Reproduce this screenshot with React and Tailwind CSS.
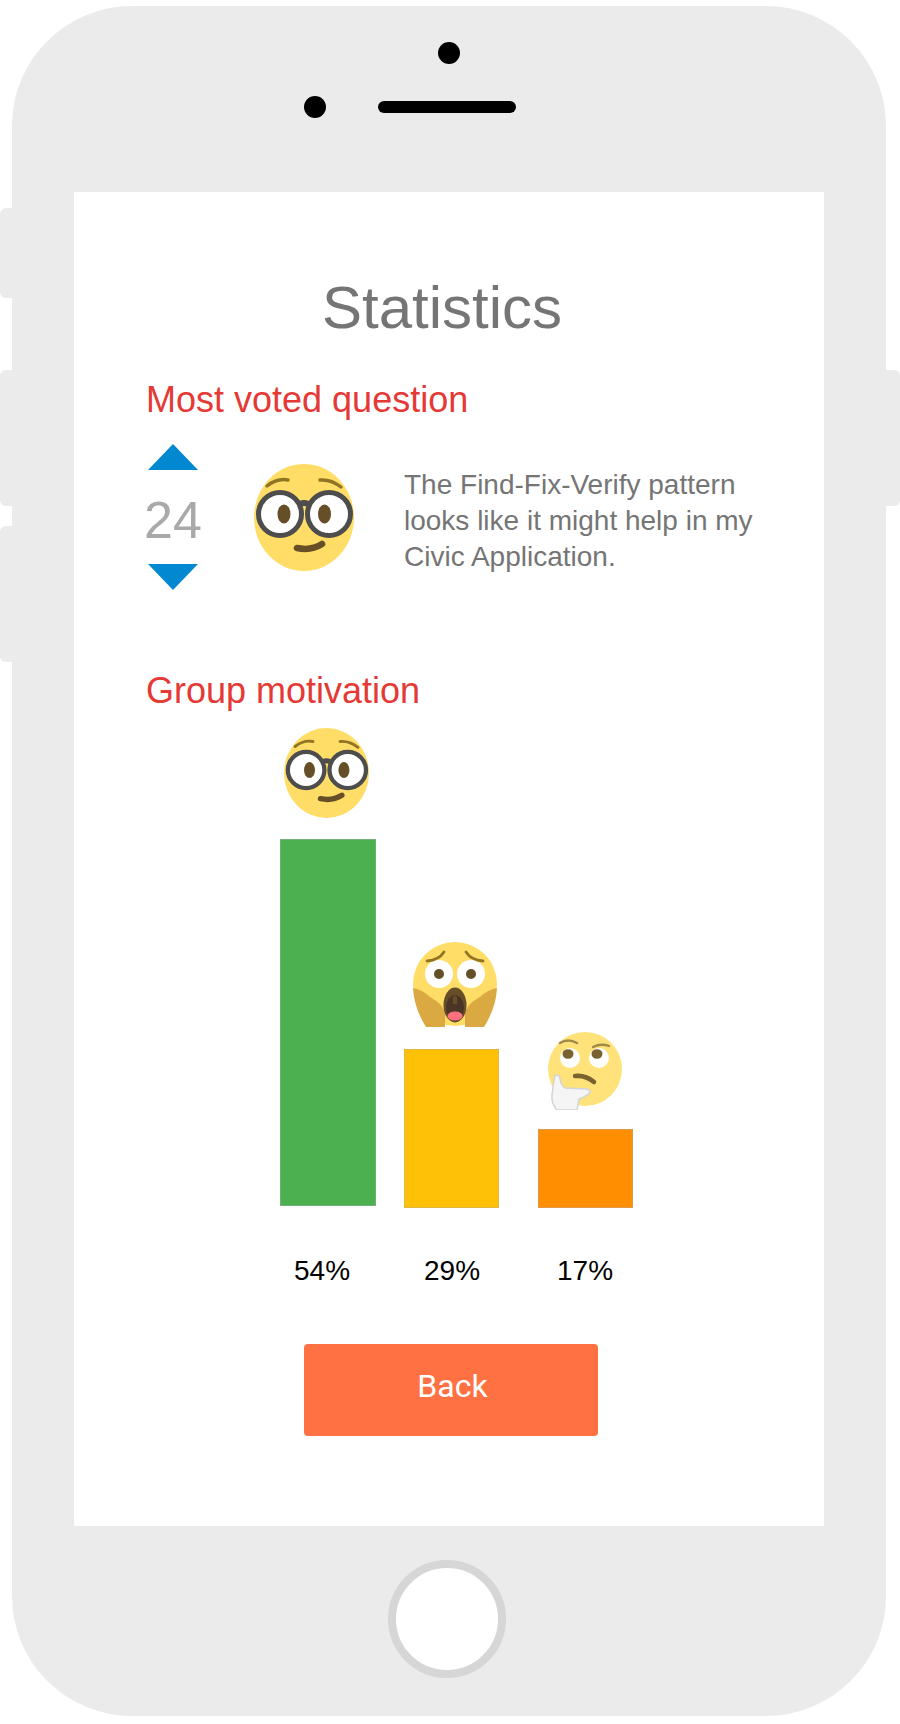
// Phone mockup with the statistics screen.

const NerdFace = ({ className }) => (
  <svg viewBox="0 0 100 107" preserveAspectRatio="none" className={className}>
    <ellipse cx="50" cy="53.5" rx="50" ry="53.5" fill="#ffdd67" />
    <path d="M13 22Q23 14 34 16M66 16Q77 15 87 23" fill="none" stroke="#917524" strokeWidth="3.5" strokeLinecap="round" />
    <circle cx="26" cy="50" r="21.5" fill="#fff" stroke="#4d4d4d" strokeWidth="5" />
    <circle cx="75" cy="50" r="21.5" fill="#fff" stroke="#4d4d4d" strokeWidth="5" />
    <path d="M46 40Q50 38 54 40" fill="none" stroke="#4d4d4d" strokeWidth="6" />
    <ellipse cx="30" cy="50" rx="6.5" ry="9.5" fill="#664e27" />
    <ellipse cx="70.5" cy="50" rx="6.5" ry="9.5" fill="#664e27" />
    <path d="M43 84Q57 87 68 80" fill="none" stroke="#664e27" strokeWidth="6.5" strokeLinecap="round" />
  </svg>
);

const ShockFace = ({ className }) => (
  <svg viewBox="0 0 84 85" className={className}>
    <circle cx="42" cy="42" r="42" fill="#ffdd67" />
    <path d="M0 46Q10 48 17 55Q30 62 32 71V85H13Q1 66 0 46Z" fill="#dba942" />
    <path d="M84 46Q74 48 67 55Q54 62 52 71V85H71Q83 66 84 46Z" fill="#dba942" />
    <circle cx="26" cy="32" r="14" fill="#fff" />
    <circle cx="58" cy="32" r="14" fill="#fff" />
    <circle cx="26" cy="32" r="5" fill="#664e27" />
    <circle cx="58" cy="32" r="5" fill="#664e27" />
    <path d="M14 19Q26 18 31 10M53 10Q58 18 70 19" fill="none" stroke="#917524" strokeWidth="2.8" strokeLinecap="round" />
    <ellipse cx="42" cy="63" rx="11.5" ry="17.5" fill="#664e27" />
    <ellipse cx="42" cy="66" rx="9" ry="13" fill="#4c3526" />
    <path d="M40 62V55Q42 52 44 55V62Z" fill="#664e27" />
    <ellipse cx="42" cy="74" rx="7.5" ry="4.5" fill="#ff717f" />
  </svg>
);

const ThinkingFace = ({ className }) => (
  <svg viewBox="0 0 74 79" className={className}>
    <circle cx="37" cy="38" r="37" fill="#ffe27a" />
    <circle cx="22" cy="27" r="10" fill="#fff" />
    <circle cx="51" cy="27" r="10" fill="#fff" />
    <ellipse cx="20" cy="23" rx="5.5" ry="4.8" fill="#7a6130" />
    <ellipse cx="49" cy="23" rx="5.5" ry="4.8" fill="#7a6130" />
    <path d="M12 12Q20 7 29 12M45 16Q53 12 61 15" fill="none" stroke="#a08a48" strokeWidth="2.4" strokeLinecap="round" />
    <path d="M27 45Q38 44 46 51" fill="none" stroke="#7a6130" strokeWidth="4.5" strokeLinecap="round" />
    <path d="M7 44Q12 44 12 48Q13 54 17 57L38 58Q43 59 42 61Q41 64 31 68L29 79H9Q3 72 4 64Q5 54 7 44Z" fill="#f5f5f5" stroke="#d0d5dc" strokeWidth="1.5" />
  </svg>
);

const BARS = [
  { pct: "54%", height: "h-[367px]", bar: "bg-[#4caf50] border-[#73b076]" },
  { pct: "29%", height: "h-[159px]", bar: "bg-[#ffc107] border-[#dfb842]" },
  { pct: "17%", height: "h-[79px]", bar: "bg-[#ff8f00] border-[#dd9b48]" },
];

export default function App() {
  return (
    <div className="relative w-[900px] h-[1724px] bg-white pt-[6px] pl-[12px] font-['Liberation_Sans',Arial,sans-serif]">
      {/* Side buttons */}
      <div className="absolute left-0 top-[208px] w-[20px] h-[90px] rounded-[6px] bg-[#ebebeb]" />
      <div className="absolute left-0 top-[370px] w-[20px] h-[136px] rounded-[6px] bg-[#ebebeb]" />
      <div className="absolute left-0 top-[526px] w-[20px] h-[136px] rounded-[6px] bg-[#ebebeb]" />
      <div className="absolute left-[880px] top-[370px] w-[20px] h-[136px] rounded-[6px] bg-[#ebebeb]" />

      <div className="relative w-[874px] h-[1710px] rounded-[120px] bg-[#ebebeb]">
        {/* Camera and speaker */}
        <div className="h-[186px] pt-[36px]">
          <div className="ml-[426px] w-[22px] h-[22px] rounded-full bg-black" />
          <div className="mt-[32px] ml-[292px] flex items-center">
            <div className="w-[22px] h-[22px] rounded-full bg-black" />
            <div className="ml-[52px] w-[138px] h-[12px] rounded-full bg-black" />
          </div>
        </div>

        {/* Screen */}
        <div className="ml-[62px] w-[750px] h-[1334px] bg-white pt-[81px]">
          <h1 className="w-[736px] text-center text-[60px] leading-[69px] text-[#757575]">Statistics</h1>

          <h2 className="mt-[37px] ml-[72px] text-[36px] leading-[41px] text-[#e53935]">Most voted question</h2>

          <div className="mt-[24px] flex">
            <div className="ml-[69px] w-[60px] flex flex-col items-center">
              <svg viewBox="0 0 50 26" className="w-[50px] h-[26px]">
                <polygon points="25,0 50,26 0,26" fill="#0288d1" />
              </svg>
              <div className="mt-[20px] text-[52px] leading-[60px] text-[#a9a9a9]">24</div>
              <svg viewBox="0 0 50 26" className="mt-[14px] w-[50px] h-[26px]">
                <polygon points="0,0 50,0 25,26" fill="#0288d1" />
              </svg>
            </div>
            <NerdFace className="ml-[51px] mt-[20px] w-[100px] h-[107px]" />
            <p className="ml-[50px] mt-[23px] w-[360px] text-[28px] leading-[36px] text-[#757575]">
              The Find-Fix-Verify pattern looks like it might help in my Civic Application.
            </p>
          </div>

          <h2 className="mt-[80px] ml-[72px] text-[36px] leading-[41px] text-[#e53935]">Group motivation</h2>

          {/* Bars */}
          <div className="mt-[6px] ml-[206px] h-[491px] flex items-end">
            <div className="w-[96px] mb-[2px]">
              <NerdFace className="ml-[4px] mb-[21px] w-[85px] h-[90px]" />
              <div className={`${BARS[0].height} border ${BARS[0].bar}`} />
            </div>
            <div className="ml-[28px] w-[95px]">
              <ShockFace className="ml-[9px] mb-[22px] w-[84px] h-[85px]" />
              <div className={`${BARS[1].height} border ${BARS[1].bar}`} />
            </div>
            <div className="ml-[39px] w-[95px]">
              <ThinkingFace className="ml-[10px] mb-[19px] w-[74px] h-[79px]" />
              <div className={`${BARS[2].height} border ${BARS[2].bar}`} />
            </div>
          </div>

          <div className="mt-[47px] ml-[220px] flex text-[28px] leading-[31px] text-black">
            <span className="w-[130px]">{BARS[0].pct}</span>
            <span className="w-[133px]">{BARS[1].pct}</span>
            <span>{BARS[2].pct}</span>
          </div>

          <button className="mt-[58px] ml-[230px] w-[294px] h-[92px] pb-[8px] pl-[3px] rounded-[4px] bg-[#ff7043] text-white text-[32px] font-['Roboto',sans-serif]">
            Back
          </button>
        </div>

        {/* Home button */}
        <div className="mt-[34px] ml-[376px] w-[118px] h-[118px] rounded-full border-[8px] border-[#d6d6d6] bg-white" />
      </div>
    </div>
  );
}
